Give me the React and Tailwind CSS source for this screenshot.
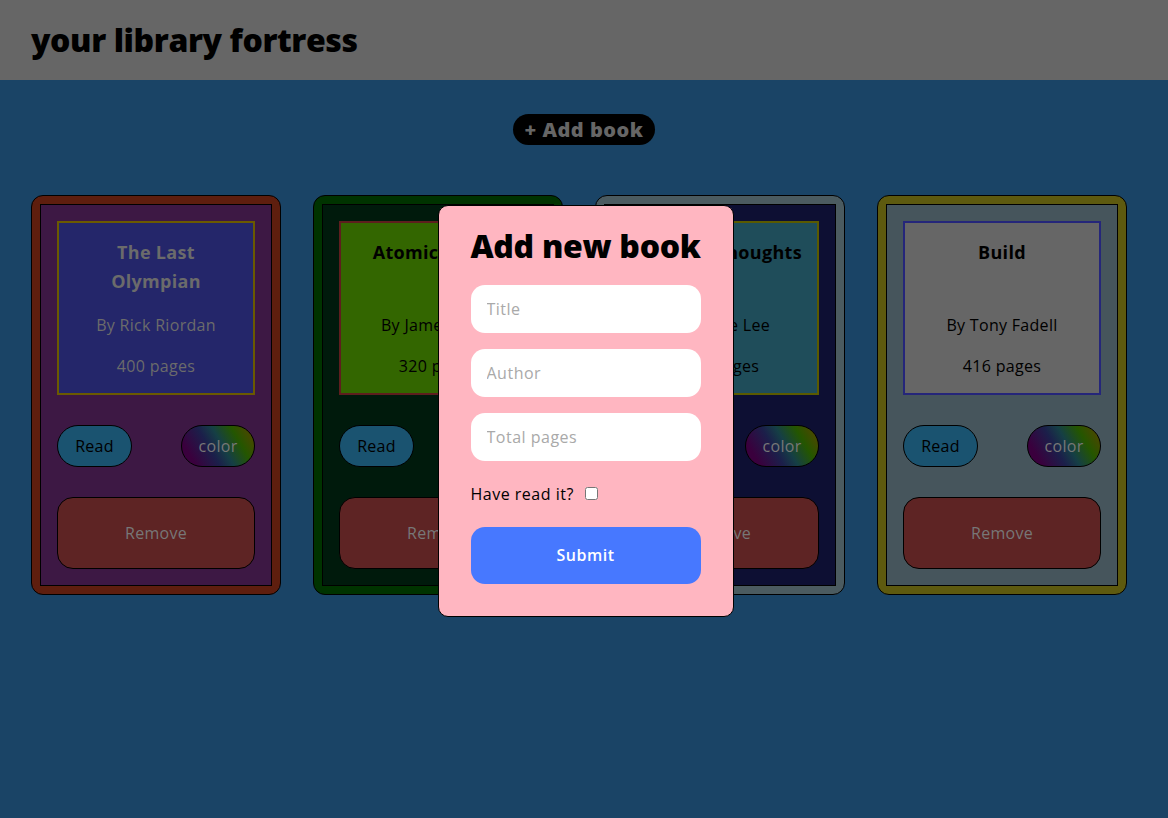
import { useState } from "react";

// Books shown on the shelf. Colours are the dimmed tones seen behind the modal backdrop.
const BOOKS = [
  {
    id: 1,
    title: "The Last Olympian",
    author: "Rick Riordan",
    pages: 400,
    outer: "bg-[#5e1e0e]",
    inner: "bg-[#3d1844]",
    box: "bg-[#24266a] border-[#6b5a00]",
    text: "text-[#6b6b6b]",
  },
  {
    id: 2,
    title: "Atomic Habits",
    author: "James Clear",
    pages: 320,
    outer: "bg-[#003300]",
    inner: "bg-[#001a0c]",
    box: "bg-[#336600] border-[#5e1e1e]",
    text: "text-black",
  },
  {
    id: 3,
    title: "Striking Thoughts",
    author: "Bruce Lee",
    pages: 240,
    outer: "bg-[#4b5b60]",
    inner: "bg-[#0d0f33]",
    box: "bg-[#1f4d5a] border-[#5a5a00]",
    text: "text-black",
  },
  {
    id: 4,
    title: "Build",
    author: "Tony Fadell",
    pages: 416,
    outer: "bg-[#5e5a0f]",
    inner: "bg-[#46555c]",
    box: "bg-[#666666] border-[#25267a]",
    text: "text-black",
  },
];

const BookCard = ({ book }) => {
  return (
    <div className={`w-[250px] h-[400px] rounded-xl border border-black p-2 shrink-0 ${book.outer}`}>
      <div className={`h-full border border-black px-4 pt-4 flex flex-col ${book.inner}`}>
        {/* Book info */}
        <div className={`h-[174px] border-2 pt-[15px] flex flex-col items-center gap-[17px] text-center tracking-[0.3px] ${book.box} ${book.text}`}>
          <h2 className="max-w-[172px] h-[58px] text-[18px] leading-[29px] font-bold">{book.title}</h2>
          <p className="text-[16px] leading-6">By {book.author}</p>
          <p className="text-[16px] leading-6">{book.pages} pages</p>
        </div>

        {/* Actions */}
        <div className="mt-[30px] flex items-center justify-between">
          <button className="w-[75px] h-[42px] rounded-full border border-black bg-[#1a5370] text-black text-[16px] tracking-[0.3px]">
            Read
          </button>
          <button className="w-[74px] h-[42px] rounded-full border border-black bg-[linear-gradient(60deg,#3a003d_15%,#1b1f4a_40%,#153f45_55%,#245600_75%,#5a4200)] text-[#777] text-[16px] tracking-[0.3px]">
            color
          </button>
        </div>
        <button className="mt-[30px] h-[72px] rounded-2xl border border-black bg-[#5e2424] text-[#777] text-[16px] tracking-[0.3px]">
          Remove
        </button>
      </div>
    </div>
  );
};

const App = () => {
  const [read, setRead] = useState(false);

  return (
    <div className="min-h-screen bg-[#1a4466] font-['Open_Sans',sans-serif]">
      {/* Header */}
      <header className="h-20 bg-[#666666] flex items-center px-[31px]">
        <h1 className="text-[32px] font-extrabold text-black tracking-[-0.4px]">your library fortress</h1>
      </header>

      <div className="flex justify-center mt-[34px]">
        <button className="h-[31px] px-[12px] rounded-full bg-black text-[#666] text-[20px] font-extrabold leading-none tracking-[0.5px]">
          + Add book
        </button>
      </div>

      {/* Shelf */}
      <div className="flex gap-8 pl-[31px] mt-[50px]">
        {BOOKS.map((book) => (
          <BookCard key={book.id} book={book} />
        ))}
      </div>

      {/* Add book modal */}
      <div className="fixed inset-0 flex items-center justify-center pl-[3px] pt-[3px]">
        <div className="w-[296px] h-[412px] rounded-[10px] border border-black bg-[#ffb6c1] px-8 pt-4">
          <h2 className="-mx-4 text-[32px] leading-[48px] font-extrabold text-black text-center whitespace-nowrap tracking-[-0.3px]">
            Add new book
          </h2>
          <form className="mt-[15px] flex flex-col gap-4 tracking-[0.5px]" onSubmit={(e) => e.preventDefault()}>
            <input
              placeholder="Title"
              className="h-12 rounded-[14px] bg-white px-4 text-[16px] placeholder:text-[#a9a9a9] outline-none"
            />
            <input
              placeholder="Author"
              className="h-12 rounded-[14px] bg-white px-4 text-[16px] placeholder:text-[#a9a9a9] outline-none"
            />
            <input
              placeholder="Total pages"
              className="h-12 rounded-[14px] bg-white px-4 text-[16px] placeholder:text-[#a9a9a9] outline-none"
            />
            <label className="mt-[5px] h-6 flex items-center gap-[11px] text-[16px] text-black">
              Have read it?
              <input type="checkbox" checked={read} onChange={() => setRead(!read)} className="w-[13px] h-[13px]" />
            </label>
            <button className="mt-[5px] h-[57px] rounded-[14px] bg-[#4778ff] text-white text-[16px] font-semibold">
              Submit
            </button>
          </form>
        </div>
      </div>
    </div>
  );
};

export default App;
